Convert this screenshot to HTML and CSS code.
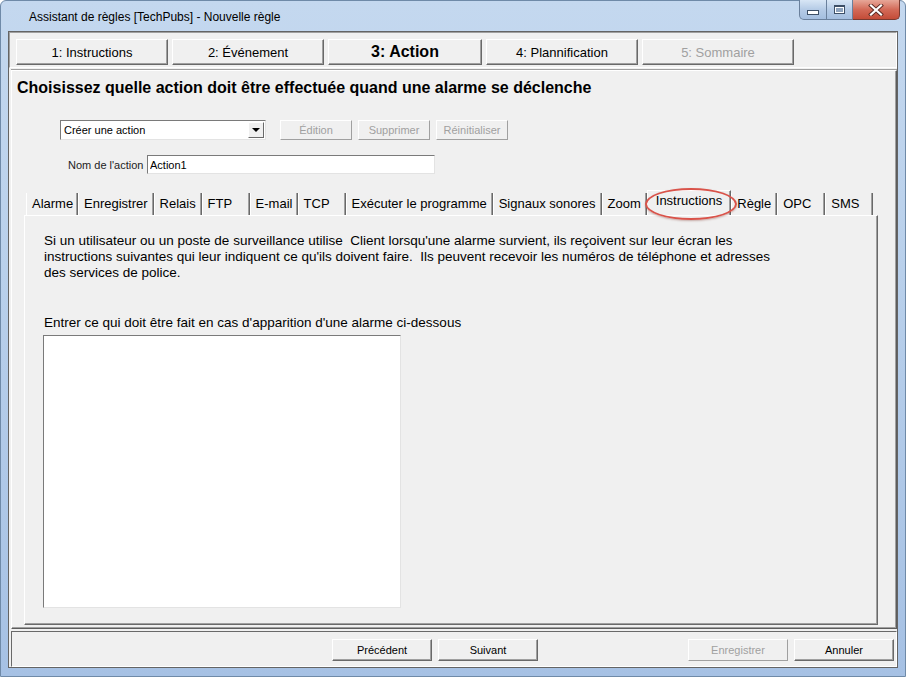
FILE: index.html
```html
<!DOCTYPE html>
<html lang="fr">
<head>
    <meta charset="UTF-8">
    <title>Assistant de règles [TechPubs] - Nouvelle règle</title>
    <link rel="stylesheet" href="styles.css">
</head>
<body>
<div class="window">
    <div class="titlebar">
        <span class="title">Assistant de règles [TechPubs] - Nouvelle règle</span>
        <div class="caption-buttons">
            <span class="cap cap-min"><span class="min-bar"></span></span>
            <span class="cap cap-max"><span class="max-box"></span></span>
            <span class="cap cap-close">
                <svg width="16" height="12" viewBox="0 0 16 12">
                    <path d="M3 1.5 L13 10.5 M13 1.5 L3 10.5" stroke="#5a2a22" stroke-width="4" stroke-linecap="square"/>
                    <path d="M3 1.5 L13 10.5 M13 1.5 L3 10.5" stroke="#ffffff" stroke-width="2.2" stroke-linecap="square"/>
                </svg>
            </span>
        </div>
    </div>

    <div class="client">
        <div class="steps">
            <button class="step">1: Instructions</button>
            <button class="step">2: Événement</button>
            <button class="step current">3: Action</button>
            <button class="step">4: Plannification</button>
            <button class="step" disabled>5: Sommaire</button>
        </div>

        <div class="page">
            <h1>Choisissez quelle action doit être effectuée quand une alarme se déclenche</h1>

            <div class="action-row">
                <div class="combo">
                    <span class="combo-text">Créer une action</span>
                    <span class="combo-arrow"></span>
                </div>
                <button class="btn" disabled>Édition</button>
                <button class="btn" disabled>Supprimer</button>
                <button class="btn" disabled>Réinitialiser</button>
            </div>

            <div class="name-row">
                <label for="actionName">Nom de l'action</label>
                <input type="text" id="actionName" value="Action1">
            </div>

            <div class="tabs">
                <div class="tab first">Alarme</div>
                <div class="tab">Enregistrer</div>
                <div class="tab fixed">Relais</div>
                <div class="tab fixed">FTP</div>
                <div class="tab fixed">E-mail</div>
                <div class="tab fixed">TCP</div>
                <div class="tab">Exécuter le programme</div>
                <div class="tab">Signaux sonores</div>
                <div class="tab">Zoom</div>
                <div class="tab selected">Instructions<span class="highlight"></span></div>
                <div class="tab">Règle</div>
                <div class="tab fixed">OPC</div>
                <div class="tab fixed">SMS</div>
            </div>

            <div class="tab-panel">
                <p class="info">Si un utilisateur ou un poste de surveillance utilise&nbsp; Client lorsqu'une alarme survient, ils reçoivent sur leur écran les<br>instructions suivantes qui leur indiquent ce qu'ils doivent faire.&nbsp; Ils peuvent recevoir les numéros de téléphone et adresses<br>des services de police.</p>
                <p class="enter-label">Entrer ce qui doit être fait en cas d'apparition d'une alarme ci-dessous</p>
                <textarea class="instructions"></textarea>
            </div>
        </div>

        <div class="footer">
            <button class="btn wide">Précédent</button>
            <button class="btn wide next">Suivant</button>
            <button class="btn wide" disabled>Enregistrer</button>
            <button class="btn wide">Annuler</button>
        </div>
    </div>
</div>
</body>
</html>
```

FILE: styles.css
```css
body {
    margin: 0;
    font-family: 'Liberation Sans', Arial, sans-serif;
    color: #000;
}
.window {
    width: 906px;
    height: 677px;
    box-sizing: border-box;
    display: flex;
    flex-direction: column;
    background: linear-gradient(to bottom, #c4d8ef 0%, #b9d0eb 40%, #a6c1e4 100%);
    border: 1px solid #6f8aa8;
    border-radius: 6px 6px 0 0;
}
.titlebar {
    height: 30px;
    display: flex;
    justify-content: space-between;
    align-items: flex-start;
}
.title {
    font-size: 12px;
    margin: 9px 0 0 28px;
}
.caption-buttons {
    display: flex;
    margin-right: 5px;
    margin-top: -1px;
}
.cap {
    height: 20px;
    display: flex;
    align-items: center;
    justify-content: center;
    box-sizing: border-box;
    border: 1px solid #6a809c;
    border-top: none;
}
.cap-min {
    width: 28px;
    border-radius: 0 0 0 5px;
    background: linear-gradient(to bottom, #d8e6f5, #b5cbe6 50%, #a4bedf);
}
.cap-max {
    width: 26px;
    border-left: none;
    background: linear-gradient(to bottom, #d8e6f5, #b5cbe6 50%, #a4bedf);
}
.cap-close {
    width: 47px;
    border-left: none;
    border-radius: 0 0 5px 0;
    background: linear-gradient(to bottom, #e7a798, #d36a58 50%, #c44c38);
    border-color: #7a3a30;
}
.min-bar {
    width: 10px;
    height: 3px;
    margin-top: 6px;
    background: #fff;
    border: 1px solid #3d4f66;
}
.max-box {
    width: 9px;
    height: 6px;
    border: 1px solid #3d4f66;
    border-top-width: 2px;
    background: #fff;
    box-shadow: inset 0 0 0 1px #fff, inset 0 0 0 3px #8ea3bd;
}

.client {
    flex: 1;
    margin: 0 7px 8px 7px;
    background: #f0f0f0;
    border: 1px solid #646464;
    display: flex;
    flex-direction: column;
}
.steps {
    height: 36px;
    display: flex;
    gap: 4px;
    padding: 6px 0 0 6px;
    box-sizing: border-box;
    border: 1px solid #a0a0a0;
    border-right-color: #fff;
    border-bottom-color: #fff;
    margin: 0 0 1px 0;
}
.step {
    width: 152px;
    height: 26px;
    font-family: 'Liberation Sans', Arial, sans-serif;
    font-size: 13px;
    background: #f0f0f0;
    border: 1px solid;
    border-color: #fff #696969 #696969 #fff;
    box-shadow: inset -1px -1px 0 #a0a0a0;
    color: #000;
    padding: 0;
}
.step.current {
    font-size: 16px;
    font-weight: bold;
    width: 154px;
}
.step:disabled {
    color: #a0a0a0;
}

.page {
    flex: 1;
    display: flex;
    flex-direction: column;
    padding: 8px 0 0 5px;
    border: 1px solid;
    border-color: #fff #5c5c5c #5c5c5c #fff;
    box-shadow: inset -1px -1px 0 #a0a0a0, 0 -1px 0 #a0a0a0;
    margin: 1px 0 2px 2px;
}
h1 {
    font-size: 16px;
    line-height: 18px;
    margin: 0;
    font-weight: bold;
}
.action-row {
    display: flex;
    gap: 6px;
    margin: 23px 0 0 43px;
    height: 20px;
}
.combo {
    width: 206px;
    height: 20px;
    box-sizing: border-box;
    background: #fff;
    border: 1px solid;
    border-color: #7a7a7a #e3e3e3 #e3e3e3 #7a7a7a;
    display: flex;
    justify-content: space-between;
    align-items: center;
    margin-right: 8px;
}
.combo-text {
    font-size: 11px;
    padding-left: 3px;
}
.combo-arrow {
    width: 16px;
    height: 16px;
    box-sizing: border-box;
    margin-right: 1px;
    background: #f0f0f0;
    border: 1px solid;
    border-color: #fff #696969 #696969 #fff;
    position: relative;
}
.combo-arrow::after {
    content: "";
    position: absolute;
    left: 3px;
    top: 5px;
    border-left: 4px solid transparent;
    border-right: 4px solid transparent;
    border-top: 4px solid #000;
}
.btn {
    width: 72px;
    height: 20px;
    font-family: 'Liberation Sans', Arial, sans-serif;
    font-size: 11px;
    background: #f0f0f0;
    border: 1px solid;
    border-color: #fff #696969 #696969 #fff;
    box-shadow: inset -1px -1px 0 #a0a0a0;
    color: #000;
    padding: 0;
}
.btn:disabled {
    color: #a0a0a0;
    border-color: #fff #a0a0a0 #a0a0a0 #fff;
    box-shadow: none;
}
.name-row {
    display: flex;
    align-items: center;
    margin: 15px 0 0 51px;
    height: 19px;
}
.name-row label {
    font-size: 11px;
    color: #222;
    width: 79px;
}
.name-row input {
    width: 288px;
    height: 19px;
    box-sizing: border-box;
    border: 1px solid;
    border-color: #7a7a7a #e3e3e3 #e3e3e3 #7a7a7a;
    font-family: 'Liberation Sans', Arial, sans-serif;
    font-size: 11px;
    padding: 0 2px;
}

.tabs {
    display: flex;
    align-items: flex-end;
    height: 25px;
    margin: 16px 0 0 7px;
    padding-left: 2px;
}
.tab {
    height: 22px;
    box-sizing: border-box;
    padding: 3px 5px 0 5px;
    font-size: 13px;
    border-left: 1px solid #fff;
    border-right: 1px solid #696969;
    box-shadow: inset -1px 0 0 #a0a0a0;
    white-space: nowrap;
}
.tab.first {
    width: 52px;
}
.tab.fixed {
    width: 48px;
}
.tab.selected {
    height: 25px;
    padding: 2px 8px 0 8px;
    position: relative;
    border-top: 1px solid #fff;
}
.highlight {
    position: absolute;
    left: -3px;
    top: -3px;
    width: 88px;
    height: 28px;
    border: 2px solid #d9534a;
    border-radius: 50%;
    box-shadow: 0 1px 2px rgba(120, 40, 30, 0.35);
}
.tab-panel {
    height: 410px;
    width: 854px;
    box-sizing: border-box;
    margin-left: 7px;
    padding: 17px 0 0 19px;
    border: 1px solid;
    border-color: #fff #696969 #696969 #fff;
    box-shadow: inset -1px -1px 0 #a0a0a0;
}
.info {
    font-size: 13.5px;
    line-height: 16px;
    margin: 0;
}
.enter-label {
    font-size: 13.5px;
    line-height: 16px;
    margin: 34px 0 4px 0;
}
.instructions {
    display: block;
    width: 358px;
    height: 273px;
    box-sizing: border-box;
    margin: 0 0 0 -1px;
    border: 1px solid;
    border-color: #7a7a7a #e3e3e3 #e3e3e3 #7a7a7a;
    resize: none;
    background: #fff;
}

.footer {
    height: 36px;
    display: flex;
    align-items: flex-start;
    justify-content: flex-end;
    gap: 6px;
    padding: 7px 2px 0 0;
    box-sizing: border-box;
    border: 1px solid;
    border-color: #696969 #fff #fff #696969;
    margin-left: 2px;
}
.btn.wide {
    width: 100px;
    height: 22px;
    font-size: 11px;
}
.btn.next {
    margin-right: 144px;
}
```
